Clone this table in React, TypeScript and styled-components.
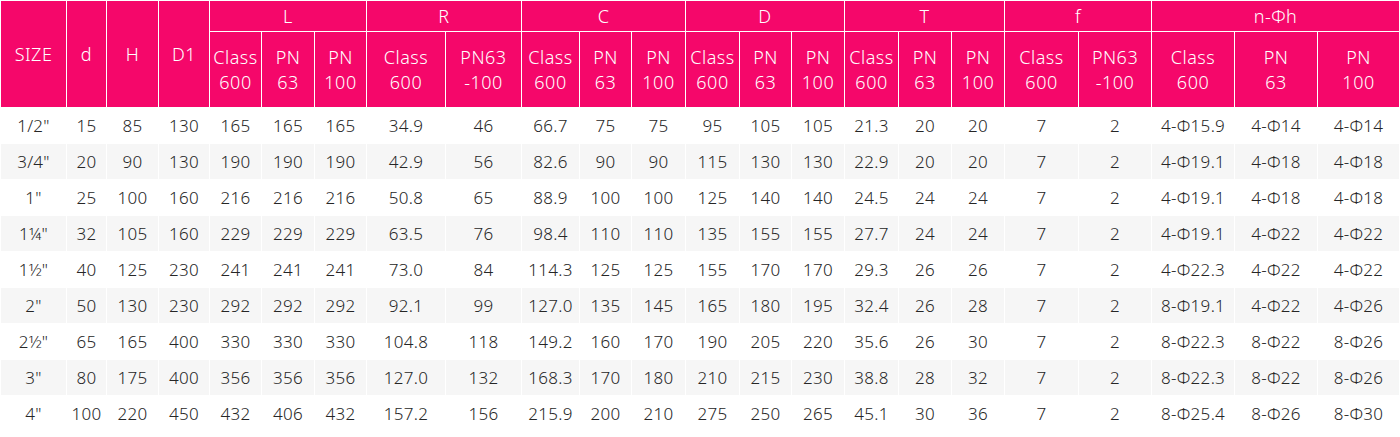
import React from "react";
import styled, { createGlobalStyle } from "styled-components";

const GlobalStyle = createGlobalStyle`
  html, body {
    margin: 0;
    padding: 0;
    background: #ffffff;
  }
  body {
    font-family: "Noto Sans", "Open Sans", "Noto Sans CJK SC", sans-serif;
  }
`;

const Table = styled.table`
  width: 1400px;
  table-layout: fixed;
  border-collapse: separate;
  border-spacing: 1px;
  margin: 0;
  font-size: 17px;
`;

const Col = styled.col<{ $w: number }>`
  width: ${({ $w }) => $w}px;
`;

const HeadCell = styled.th<{ $tall?: boolean }>`
  background: #f5076a;
  color: #ffffff;
  font-size: 18px;
  font-weight: 300;
  text-align: center;
  padding: 0;
  line-height: 25px;
  height: ${({ $tall }) => ($tall ? "75px" : "30px")};
  letter-spacing: 0.5px;
  white-space: nowrap;
`;

const Row = styled.tr<{ $shade: boolean }>`
  background: ${({ $shade }) => ($shade ? "#f6f6f6" : "#ffffff")};
`;

const Cell = styled.td`
  height: 35px;
  padding: 0;
  text-align: center;
  color: #262626;
  font-weight: 300;
  white-space: nowrap;
  letter-spacing: 0.3px;
`;

const widths = [
  65, 39, 51, 50, 51, 52, 51, 78, 75, 57, 51, 53, 53, 51, 52, 53, 52, 52, 73, 72, 82, 82, 81,
];

const groups = ["L", "R", "C", "D", "T", "f", "n-Φh"];

const groupSpans = [3, 2, 3, 3, 3, 2, 3];

const subHeads: [string, string][] = [
  ["Class", "600"], ["PN", "63"], ["PN", "100"],
  ["Class", "600"], ["PN63", "-100"],
  ["Class", "600"], ["PN", "63"], ["PN", "100"],
  ["Class", "600"], ["PN", "63"], ["PN", "100"],
  ["Class", "600"], ["PN", "63"], ["PN", "100"],
  ["Class", "600"], ["PN63", "-100"],
  ["Class", "600"], ["PN", "63"], ["PN", "100"],
];

const rows: string[][] = [
  ["1/2\"", "15", "85", "130", "165", "165", "165", "34.9", "46", "66.7", "75", "75", "95", "105", "105", "21.3", "20", "20", "7", "2", "4-Φ15.9", "4-Φ14", "4-Φ14"],
  ["3/4\"", "20", "90", "130", "190", "190", "190", "42.9", "56", "82.6", "90", "90", "115", "130", "130", "22.9", "20", "20", "7", "2", "4-Φ19.1", "4-Φ18", "4-Φ18"],
  ["1\"", "25", "100", "160", "216", "216", "216", "50.8", "65", "88.9", "100", "100", "125", "140", "140", "24.5", "24", "24", "7", "2", "4-Φ19.1", "4-Φ18", "4-Φ18"],
  ["1¼\"", "32", "105", "160", "229", "229", "229", "63.5", "76", "98.4", "110", "110", "135", "155", "155", "27.7", "24", "24", "7", "2", "4-Φ19.1", "4-Φ22", "4-Φ22"],
  ["1½\"", "40", "125", "230", "241", "241", "241", "73.0", "84", "114.3", "125", "125", "155", "170", "170", "29.3", "26", "26", "7", "2", "4-Φ22.3", "4-Φ22", "4-Φ22"],
  ["2\"", "50", "130", "230", "292", "292", "292", "92.1", "99", "127.0", "135", "145", "165", "180", "195", "32.4", "26", "28", "7", "2", "8-Φ19.1", "4-Φ22", "4-Φ26"],
  ["2½\"", "65", "165", "400", "330", "330", "330", "104.8", "118", "149.2", "160", "170", "190", "205", "220", "35.6", "26", "30", "7", "2", "8-Φ22.3", "8-Φ22", "8-Φ26"],
  ["3\"", "80", "175", "400", "356", "356", "356", "127.0", "132", "168.3", "170", "180", "210", "215", "230", "38.8", "28", "32", "7", "2", "8-Φ22.3", "8-Φ22", "8-Φ26"],
  ["4\"", "100", "220", "450", "432", "406", "432", "157.2", "156", "215.9", "200", "210", "275", "250", "265", "45.1", "30", "36", "7", "2", "8-Φ25.4", "8-Φ26", "8-Φ30"],
];

export default function App() {
  return (
    <>
      <GlobalStyle />
      <Table>
        <colgroup>
          {widths.map((w, i) => (
            <Col key={i} $w={w} />
          ))}
        </colgroup>
        <thead>
          <tr>
            <HeadCell rowSpan={2}>SIZE</HeadCell>
            <HeadCell rowSpan={2}>d</HeadCell>
            <HeadCell rowSpan={2}>H</HeadCell>
            <HeadCell rowSpan={2}>D1</HeadCell>
            {groups.map((g, i) => (
              <HeadCell key={g} colSpan={groupSpans[i]}>
                {g}
              </HeadCell>
            ))}
          </tr>
          <tr>
            {subHeads.map(([a, b], i) => (
              <HeadCell key={i} $tall>
                {a}
                <br />
                {b}
              </HeadCell>
            ))}
          </tr>
        </thead>
        <tbody>
          {rows.map((r, i) => (
            <Row key={i} $shade={i % 2 === 1}>
              {r.map((v, j) => (
                <Cell key={j}>{v}</Cell>
              ))}
            </Row>
          ))}
        </tbody>
      </Table>
    </>
  );
}
